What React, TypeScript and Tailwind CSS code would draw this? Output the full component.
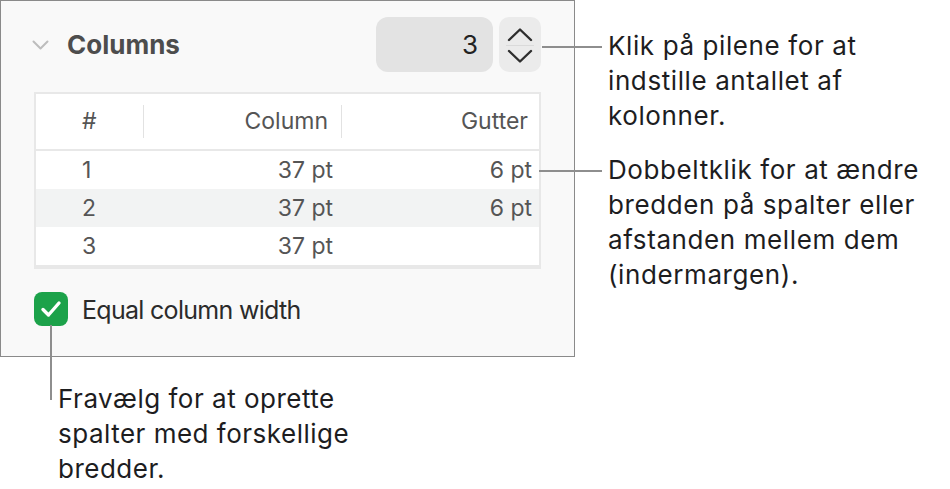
import React from 'react';

const font = { fontFamily: 'Inter, "Noto Sans", sans-serif' };

const rows = [
  { n: '1', col: '37 pt', gut: '6 pt' },
  { n: '2', col: '37 pt', gut: '6 pt' },
  { n: '3', col: '37 pt', gut: '' },
];

const Stepper = () => {
  return (
    <div className="w-[42px] h-[55px] rounded-[10px] bg-[#ebebeb] flex flex-col items-center justify-center">
      <svg width="28" height="15" viewBox="0 0 28 15" className="mt-[1px]">
        <path d="M3 13 L14 2.5 L25 13" fill="none" stroke="#2e2e2e" strokeWidth="2.4" strokeLinecap="round" strokeLinejoin="round" />
      </svg>
      <div className="w-[28px] h-[1px] bg-[#dadada] my-[3px]" />
      <svg width="28" height="15" viewBox="0 0 28 15">
        <path d="M3 2 L14 12.5 L25 2" fill="none" stroke="#2e2e2e" strokeWidth="2.4" strokeLinecap="round" strokeLinejoin="round" />
      </svg>
    </div>
  );
};

const App = () => {
  return (
    <div className="relative w-[950px] h-[489px] bg-white overflow-hidden text-[#1d1d1f]" style={font}>
      <div className="flex">
        <div className="flex flex-col">
          <div className="w-[575px] h-[357px] border border-[#8a8a8a] bg-[#f9f9f9] pt-[16px] px-[33px]">
            <div className="flex items-center h-[55px]">
              <svg width="17" height="10" viewBox="0 0 17 10" className="-ml-[2px]">
                <path d="M1.5 1.5 L8.5 8.5 L15.5 1.5" fill="none" stroke="#bdbdbd" strokeWidth="2" strokeLinecap="round" strokeLinejoin="round" />
              </svg>
              <span className="ml-[18px] text-[26px] font-bold text-[#4d4d4d] leading-none">Columns</span>
              <div className="flex-1" />
              <div className="w-[117px] h-[55px] rounded-[12px] bg-[#e3e3e3] flex items-center justify-end pr-[15px] text-[26px] text-[#222]">
                3
              </div>
              <div className="ml-[6px]">
                <Stepper />
              </div>
            </div>

            <div className="mt-[20px] border-2 border-b-4 border-[#e8e8e8] bg-white text-[23px] text-[#555]">
              <div className="flex items-center h-[57px] border-b-2 border-[#e8e8e8]">
                <div className="w-[107px] pl-[46px]">#</div>
                <div className="w-px h-[33px] bg-[#e2e2e2]" />
                <div className="w-[197px] text-right pr-[13px]">Column</div>
                <div className="w-px h-[33px] bg-[#e2e2e2]" />
                <div className="flex-1 text-right pr-[11px]">Gutter</div>
              </div>
              {rows.map((r, i) => (
                <div key={r.n} className={`flex items-center h-[38px] ${i === 1 ? 'bg-[#f2f3f3]' : ''}`}>
                  <div className="w-[108px] pl-[46px]">{r.n}</div>
                  <div className="w-[198px] text-right pr-[9px]">{r.col}</div>
                  <div className="flex-1 text-right pr-[7px]">{r.gut}</div>
                </div>
              ))}
            </div>

            <div className="mt-[19px] flex items-center">
              <div className="w-[34px] h-[34px] rounded-[8px] bg-[#1ca24a] flex items-center justify-center">
                <svg width="22" height="18" viewBox="0 0 22 18">
                  <path d="M3 9.5 L8.5 15 L19 3" fill="none" stroke="white" strokeWidth="3.4" strokeLinecap="round" strokeLinejoin="round" />
                </svg>
              </div>
              <span className="ml-[14px] mt-[4px] text-[25px] tracking-[-0.7px] text-[#2b2b2b]">Equal column width</span>
            </div>
          </div>

          <p className="mt-[24px] ml-[58px] text-[26px] leading-[35px] tracking-[0.5px]">
            Fravælg for at oprette
            <br />
            spalter med forskellige
            <br />
            bredder.
          </p>
        </div>

        <div className="pl-[33px] pt-[28px] text-[26px] leading-[35px] tracking-[0.6px]">
          <p>
            Klik på pilene for at
            <br />
            indstille antallet af
            <br />
            kolonner.
          </p>
          <p className="mt-[19px]">
            Dobbeltklik for at ændre
            <br />
            bredden på spalter eller
            <br />
            afstanden mellem dem
            <br />
            (indermargen).
          </p>
        </div>
      </div>

      {/* callout lines */}
      <div className="absolute left-[542px] top-[46px] w-[60px] h-[2px] bg-[#8e8e8e]" />
      <div className="absolute left-[539px] top-[170px] w-[63px] h-[2px] bg-[#8e8e8e]" />
      <div className="absolute left-[50px] top-[325px] w-[2px] h-[75px] bg-[#8e8e8e]" />
    </div>
  );
};

export default App;
